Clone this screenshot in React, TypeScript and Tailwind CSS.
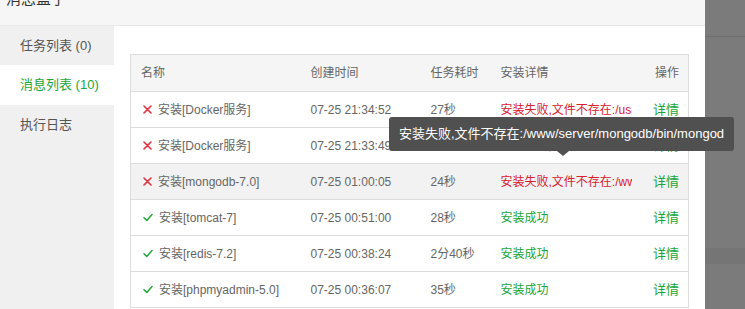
import React from "react";

type Row = { ok: boolean; name: string; time: string; dur: string; detail: string; hover?: boolean };

const rows: Row[] = [
  { ok: false, name: "安装[Docker服务]", time: "07-25 21:34:52", dur: "27秒", detail: "安装失败,文件不存在:/usr/local/docker" },
  { ok: false, name: "安装[Docker服务]", time: "07-25 21:33:49", dur: "25秒", detail: "安装失败,文件不存在:/usr/local/docker" },
  { ok: false, name: "安装[mongodb-7.0]", time: "07-25 01:00:05", dur: "24秒", detail: "安装失败,文件不存在:/www/server/mongodb/bin/mongod", hover: true },
  { ok: true, name: "安装[tomcat-7]", time: "07-25 00:51:00", dur: "28秒", detail: "安装成功" },
  { ok: true, name: "安装[redis-7.2]", time: "07-25 00:38:24", dur: "2分40秒", detail: "安装成功" },
  { ok: true, name: "安装[phpmyadmin-5.0]", time: "07-25 00:36:07", dur: "35秒", detail: "安装成功" },
];

const XIcon = () => (
  <svg width="9" height="9" viewBox="0 0 9 9" className="shrink-0">
    <path d="M1 1 L8 8 M8 1 L1 8" stroke="#e0313d" strokeWidth="1.6" strokeLinecap="round" />
  </svg>
);

const CheckIcon = () => (
  <svg width="10" height="9" viewBox="0 0 10 9" className="shrink-0">
    <path d="M1 4.8 L3.8 7.4 L9 1.6" stroke="#20a53a" strokeWidth="1.5" fill="none" strokeLinecap="round" strokeLinejoin="round" />
  </svg>
);

export default function App() {
  const font = { fontFamily: '"Liberation Sans", "Noto Sans CJK SC", sans-serif' };
  return (
    <div className="flex w-[745px] h-[309px] overflow-hidden" style={font}>
      <div className="w-[705px] h-full bg-white flex flex-col">
        <div className="h-[26px] shrink-0 bg-[#f6f6f6] border-b border-[#e8e8e8] overflow-hidden">
          <div className="mt-[-13px] ml-[6px] text-[15px] text-[#333] leading-[24px]">消息盒子</div>
        </div>
        <div className="flex flex-1 min-h-0">
          <div className="w-[114px] shrink-0 bg-[#f0f0f0] flex flex-col text-[13px]">
            <div className="h-[39px] flex items-center pl-[20px] text-[#555]">任务列表 (0)</div>
            <div className="h-[40px] flex items-center pl-[20px] bg-white text-[#20a53a]">消息列表 (10)</div>
            <div className="h-[40px] flex items-center pl-[20px] text-[#555]">执行日志</div>
          </div>
          <div className="flex-1 pl-[16px] pt-[28px] relative">
            <table className="w-[558px] table-fixed border-collapse border border-[#ddd] text-[12px] text-[#666]">
              <colgroup>
                <col className="w-[170px]" />
                <col className="w-[120px]" />
                <col className="w-[70px]" />
                <col className="w-[150px]" />
                <col className="w-[48px]" />
              </colgroup>
              <thead>
                <tr className="h-[37px] bg-[#f5f5f5] border-b border-[#ddd]">
                  <th className="font-normal text-left pl-[10px]">名称</th>
                  <th className="font-normal text-left pl-[10px]">创建时间</th>
                  <th className="font-normal text-left pl-[10px]">任务耗时</th>
                  <th className="font-normal text-left pl-[10px]">安装详情</th>
                  <th className="font-normal text-right pr-[9px]">操作</th>
                </tr>
              </thead>
              <tbody>
                {rows.map((r, i) => (
                  <tr key={i} className={`h-[36px] border-b border-[#ddd] ${r.hover ? "bg-[#f2f2f2]" : ""}`}>
                    <td className="pl-[12px] whitespace-nowrap overflow-hidden">
                      <div className="flex items-center gap-[6px]">
                        {r.ok ? <CheckIcon /> : <XIcon />}
                        <span>{r.name}</span>
                      </div>
                    </td>
                    <td className="pl-[10px] whitespace-nowrap">{r.time}</td>
                    <td className="pl-[10px] whitespace-nowrap">{r.dur}</td>
                    <td className="pl-[10px] pr-[10px]">
                      <div className={`w-[131px] whitespace-nowrap overflow-hidden ${r.ok ? "text-[#20a53a]" : "text-[#d6212f]"}`}>{r.detail}</div>
                    </td>
                    <td className="text-right pr-[9px] text-[#20a53a] text-[13px]">详情</td>
                  </tr>
                ))}
              </tbody>
            </table>
            <div className="absolute left-[275px] top-[91px] h-[34px] px-[10px] flex items-center bg-[#505050] rounded-[3px] text-white text-[13px] whitespace-nowrap z-10">
              安装失败,文件不存在:/www/server/mongodb/bin/mongod
              <div className="absolute left-[168px] bottom-[-5px] w-0 h-0 border-l-[6px] border-r-[6px] border-t-[5px] border-l-transparent border-r-transparent border-t-[#505050]" />
            </div>
          </div>
        </div>
      </div>
      <div className="w-[40px] h-full bg-[#7b7b7b] flex flex-col">
        <div className="h-[36px] shrink-0" />
        <div className="h-[1px] bg-[#6e6e6e]" />
        <div className="h-[211px] shrink-0" />
        <div className="h-[16px] bg-[#757575]" />
      </div>
    </div>
  );
}
